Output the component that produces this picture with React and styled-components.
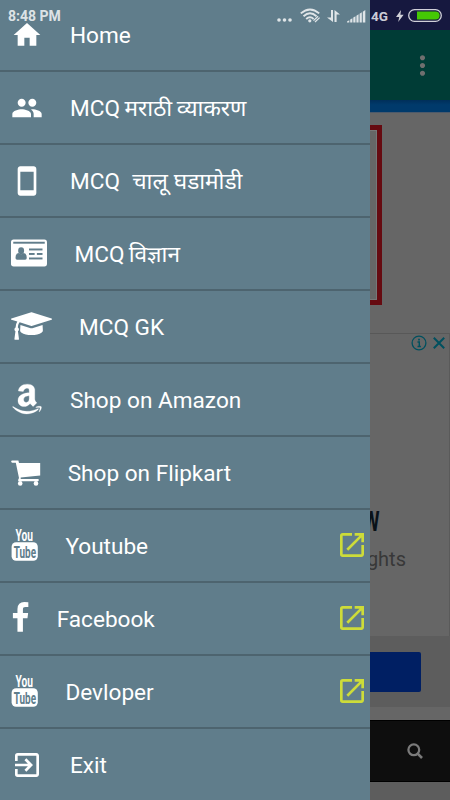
import styled, { createGlobalStyle, css } from "styled-components";
import {
  MdHome,
  MdStayCurrentPortrait,
  MdExitToApp,
  MdOpenInNew,
  MdMoreVert,
} from "react-icons/md";
import { FaAmazon } from "react-icons/fa";

const GlobalStyle = createGlobalStyle`
  * {
    box-sizing: border-box;
  }

  body {
    margin: 0;
    font-family: Roboto, "Noto Sans", sans-serif;
  }
`;

const Screen = styled.div`
  position: relative;
  width: 450px;
  height: 800px;
  overflow: hidden;
  background: #666;
`;

/* ---------- page under the drawer (already dimmed) ---------- */

const Page = styled.main`
  display: flex;
  flex-direction: column;
  height: 100%;
`;

const StatusBackground = styled.div`
  height: 30px;
  background: #16183f;
`;

const Toolbar = styled.header`
  display: flex;
  align-items: center;
  justify-content: flex-end;
  height: 70px;
  padding-right: 12px;
  background: #003c36;
  color: #6f6f6f;
`;

const BlueStrip = styled.div`
  height: 13px;
  background: linear-gradient(#002f5a, #003a6b 40%);
  border-bottom: 1px solid #4d5a6b;
`;

const Banner = styled.section`
  width: 382px;
  height: 180px;
  margin: 12px 0 28px;
  border: 5px solid #660a10;
  border-left: none;
  box-shadow: inset -1px 0 #777, inset 0 1px #777, inset 0 -1px #777;
`;

const Ad = styled.section`
  display: flex;
  flex-direction: column;
  height: 303px;
  border-top: 1px solid #585858;
  border-right: 1px solid #5a5a5a;
`;

const AdChoices = styled.div`
  display: flex;
  justify-content: flex-end;
  align-items: center;
  gap: 6px;
  padding: 1px 4px 0 0;
  color: #00505f;
`;

const AdTitle = styled.h2`
  margin: 155px 69px 0 0;
  font-size: 27px;
  font-weight: 700;
  line-height: 32px;
  text-align: right;
  color: #0a1218;

  span {
    display: inline-block;
    transform: scaleX(0.7);
    transform-origin: right;
  }
`;

const AdText = styled.p`
  margin: 9px 43px 0 0;
  font-size: 20px;
  line-height: 24px;
  text-align: right;
  color: #383838;
`;

const AdFooter = styled.div`
  display: flex;
  align-items: center;
  height: 71px;
  background: #5d5d5d;
`;

const AdButton = styled.div`
  width: 421px;
  height: 40px;
  border-radius: 2px;
  background: #001f63;
`;

const SearchBar = styled.div`
  display: flex;
  align-items: center;
  justify-content: flex-end;
  height: 62px;
  margin-top: 13px;
  padding-right: 27px;
  background: #0e0e0e;
  border: solid #000;
  border-width: 1px 0;
  color: #7a7a7a;
`;

const PageBottom = styled.div`
  flex: 1;
  background: #5d5d5d;
`;

/* ---------- drawer ---------- */

const Drawer = styled.nav`
  position: absolute;
  inset: 0 auto 0 0;
  width: 370px;
  overflow: hidden;
  background: #607d8b;
  color: #fff;
`;

const Menu = styled.ul`
  margin: -1px 0 0;
  padding: 0;
  list-style: none;
`;

const MenuItem = styled.li`
  display: flex;
  align-items: center;
  height: 73px;
  padding: 0 2px 0 11px;
  border-bottom: 2px solid #4d646f;

  &:last-child {
    border-bottom-color: transparent;
  }
`;

const IconSlot = styled.span`
  display: flex;
  flex: none;
  width: ${(props) => props.$width}px;
  margin-right: 27px;

  ${(props) =>
    props.$raised &&
    css`
      margin-top: -2px;
    `}
`;

const Label = styled.span`
  flex: 1;
  padding-top: 2px;
  font-size: 22.6px;
  line-height: 28px;
  white-space: pre;
  word-spacing: ${(props) => props.$spacing || 0}px;
`;

const OpenIcon = styled(MdOpenInNew)`
  flex: none;
  margin-top: -1px;
  color: #cddc39;
`;

/* ---------- status bar ---------- */

const StatusBar = styled.div`
  position: absolute;
  inset: 0 0 auto 0;
  display: flex;
  align-items: center;
  height: 31px;
  padding: 0 8px;
  font-size: 14px;
  font-weight: 700;
  color: rgba(255, 255, 255, 0.8);
`;

const Clock = styled.span`
  flex: 1;
`;

const Network = styled.span`
  margin: 0 8px 0 5px;
  font-size: 13.5px;
`;

const StatusGlyph = styled.svg`
  flex: none;
  margin-right: ${(props) => props.$gap || 0}px;
  fill: currentColor;
`;

const YoutubeLogo = styled.svg`
  overflow: visible;
  font-weight: 700;
`;

const PeopleIcon = () => (
  <svg width="32" height="32" viewBox="0 0 24 24" fill="currentColor">
    <path d="M16 11c1.66 0 2.99-1.34 2.99-3S17.66 5 16 5c-1.66 0-3 1.34-3 3s1.34 3 3 3zm-8 0c1.66 0 2.99-1.34 2.99-3S9.66 5 8 5C6.34 5 5 6.34 5 8s1.34 3 3 3zm0 2c-2.33 0-7 1.17-7 3.5V19h14v-2.5c0-2.33-4.67-3.5-7-3.5zm8 0c-.29 0-.62.02-.97.05 1.16.84 1.97 1.97 1.97 3.45V19h6v-2.5c0-2.33-4.67-3.5-7-3.5z" />
  </svg>
);

const IdCardIcon = () => (
  <svg width="36" height="32" viewBox="0 0 2048 1792">
    <rect y="128" width="2048" height="1536" rx="150" fill="#fff" />
    <g fill="#607d8b">
      <rect x="128" y="256" width="1792" height="110" />
      <ellipse cx="576" cy="770" rx="170" ry="195" />
      <path d="M430 900q146 130 292 0 174 20 174 280 0 100-90 100H346q-90 0-90-100 0-260 174-280z" />
      <rect x="1024" y="640" width="768" height="110" />
      <rect x="1024" y="896" width="320" height="110" />
      <rect x="1472" y="896" width="320" height="110" />
      <rect x="1024" y="1152" width="768" height="110" />
    </g>
  </svg>
);

const GraduationIcon = () => (
  <svg width="41" height="32" viewBox="0 0 2304 1792" fill="currentColor">
    <path d="M1774 836l18 316q4 69-82 128t-235 93.5-323 34.5-323-34.5-235-93.5-82-128l18-316 574 181q22 7 48 7t48-7zm530-324q0 23-22 31l-1120 352q-4 1-10 1t-10-1l-652-206q-43 34-71 111.5t-34 178.5q63 36 63 109 0 69-58 107l58 433q2 14-8 25-9 11-24 11h-192q-15 0-24-11-10-11-8-25l58-433q-58-38-58-107 0-73 65-111 11-207 98-330l-333-104q-22-8-22-31t22-31l1120-352q4-1 10-1t10 1l1120 352q22 8 22 31z" />
  </svg>
);

// basket sits on a flat rail with two wheels
const CartIcon = () => (
  <svg width="29.7" height="32" viewBox="0 0 29.7 32" fill="currentColor">
    <path d="M1.3 4.4H7.4L8 7H29.2V19.4L9.7 21.5V23H26.8A1.1 1.1 0 0 1 26.8 25.2H8A1 1 0 0 1 7.2 23.8L8 22 4.8 6.7H1.3A1.1 1.1 0 0 1 1.3 4.4z" />
    <circle cx="9.2" cy="27.4" r="2.3" />
    <circle cx="25" cy="27.4" r="2.3" />
  </svg>
);

const FacebookIcon = () => (
  <svg width="18.7" height="32" viewBox="384 0 1024 1792" fill="currentColor">
    <path d="M1343 12v264h-157q-86 0-116 36t-30 108v189h293l-39 296h-254v759h-306v-759h-255v-296h255v-218q0-186 104-288.5t277-102.5q147 0 228 12z" />
  </svg>
);

const YoutubeIcon = () => (
  <YoutubeLogo width="27.4" height="32" viewBox="0 0 27.4 32">
    <text
      x="4.6"
      y="12"
      fill="#fff"
      fontSize="16"
      textLength="17.4"
      lengthAdjust="spacingAndGlyphs"
    >
      You
    </text>
    <rect x="0.6" y="13.2" width="26.2" height="18.6" rx="4.5" fill="#fff" />
    <text
      x="2.8"
      y="28.8"
      fill="#607d8b"
      fontSize="16.5"
      textLength="22.2"
      lengthAdjust="spacingAndGlyphs"
    >
      Tube
    </text>
  </YoutubeLogo>
);

const items = [
  { label: "Home", icon: <MdHome size={32} />, width: 32 },
  {
    label: "MCQ मराठी व्याकरण",
    icon: <PeopleIcon />,
    width: 32,
    spacing: -1,
  },
  {
    label: "MCQ  चालू घडामोडी",
    icon: <MdStayCurrentPortrait size={32} />,
    width: 32,
    spacing: 0.5,
  },
  {
    label: "MCQ विज्ञान",
    icon: <IdCardIcon />,
    width: 36.6,
    raised: true,
    spacing: -1.5,
  },
  { label: "MCQ GK", icon: <GraduationIcon />, width: 41, raised: true },
  {
    label: "Shop on Amazon",
    icon: <FaAmazon size={34} stroke="currentColor" strokeWidth={4} />,
    width: 32,
    raised: true,
  },
  { label: "Shop on Flipkart", icon: <CartIcon />, width: 29.7, raised: true },
  {
    label: "Youtube",
    icon: <YoutubeIcon />,
    width: 27.4,
    raised: true,
    external: true,
  },
  {
    label: "Facebook",
    icon: <FacebookIcon />,
    width: 18.7,
    raised: true,
    external: true,
  },
  {
    label: "Devloper",
    icon: <YoutubeIcon />,
    width: 27.4,
    raised: true,
    external: true,
  },
  { label: "Exit", icon: <MdExitToApp size={32} />, width: 32 },
];

const StatusIcons = () => (
  <>
    <StatusGlyph width="15" height="14" $gap={8}>
      <circle cx="2" cy="11" r="1.8" />
      <circle cx="7.5" cy="11" r="1.8" />
      <circle cx="13" cy="11" r="1.8" />
    </StatusGlyph>
    <StatusGlyph width="21" height="15" $gap={6}>
      <g fill="none" stroke="currentColor" strokeWidth="1.9">
        <path d="M0.8 5.4Q10 -2.6 19.2 5.4" />
        <path d="M3.5 8.2Q10 2.4 16.5 8.2" />
        <path d="M6.2 11Q10 7.4 13.6 11" />
        <path d="M13.5 12.6l4.6-4.4M15 14l4.6-4.4" strokeWidth="1.3" />
      </g>
      <circle cx="9.8" cy="12.8" r="1.6" />
    </StatusGlyph>
    <StatusGlyph width="13" height="14" $gap={7}>
      <path d="M4 1h2v12L0 8.6h4zM7.5 13V1l5.5 4.6H9.6V13z" />
    </StatusGlyph>
    <StatusGlyph width="19" height="14">
      <path d="M0 13.5v-1l2.3-1.3v2.3zM3.2 13.5v-3l2.2-1.3v4.3zM6.3 13.5V8.6l2.2-1.4v6.3zM9.4 13.5V6.7l2.2-1.4v8.2zM12.6 13.5V4.8l2.2-1.5v10.2zM15.8 13.5V2.8L18.3 1v12.5z" />
    </StatusGlyph>
    <Network>4G</Network>
    <StatusGlyph width="8" height="12" $gap={4}>
      <path d="M5 0L0 7h3.2L2.2 12 7.6 4.8H4.4z" />
    </StatusGlyph>
    <StatusGlyph width="34" height="13">
      <rect
        x="0.7"
        y="0.7"
        width="32.6"
        height="11.6"
        rx="5.8"
        fill="none"
        stroke="currentColor"
        strokeWidth="1.3"
      />
      <path d="M9 2.4h18.5a4.1 4.1 0 0 1 0 8.2H9z" fill="#45c804" />
    </StatusGlyph>
  </>
);

export default function App() {
  return (
    <>
      <GlobalStyle />
      <Screen>
        <Page>
          <StatusBackground />
          <Toolbar>
            <MdMoreVert size={31} />
          </Toolbar>
          <BlueStrip />
          <Banner />
          <Ad>
            <AdChoices>
              <svg width="16" height="16" fill="none" stroke="currentColor">
                <circle cx="8" cy="8" r="6.9" strokeWidth="1.3" />
                <path d="M6.5 7h1.8v4.5M6.5 11.5h3.4" strokeWidth="1.4" />
                <path d="M8 3.8v1.7" strokeWidth="1.8" />
              </svg>
              <svg width="12" height="12" stroke="currentColor" strokeWidth="2">
                <path d="M0.8 0.8l10.4 10.4M11.2 0.8L0.8 11.2" />
              </svg>
            </AdChoices>
            <AdTitle>
              <span>W</span>
            </AdTitle>
            <AdText>ghts</AdText>
          </Ad>
          <AdFooter>
            <AdButton />
          </AdFooter>
          <SearchBar>
            <svg width="16" height="16" fill="none" stroke="currentColor">
              <circle cx="6.8" cy="6.8" r="5.4" strokeWidth="2.3" />
              <path d="M10.7 10.7l4.3 4.3" strokeWidth="2.6" />
            </svg>
          </SearchBar>
          <PageBottom />
        </Page>
        <Drawer>
          <Menu>
            {items.map((item) => (
              <MenuItem key={item.label}>
                <IconSlot $width={item.width} $raised={item.raised}>
                  {item.icon}
                </IconSlot>
                <Label $spacing={item.spacing}>{item.label}</Label>
                {item.external && <OpenIcon size={32} />}
              </MenuItem>
            ))}
          </Menu>
        </Drawer>
        <StatusBar>
          <Clock>8:48 PM</Clock>
          <StatusIcons />
        </StatusBar>
      </Screen>
    </>
  );
}
